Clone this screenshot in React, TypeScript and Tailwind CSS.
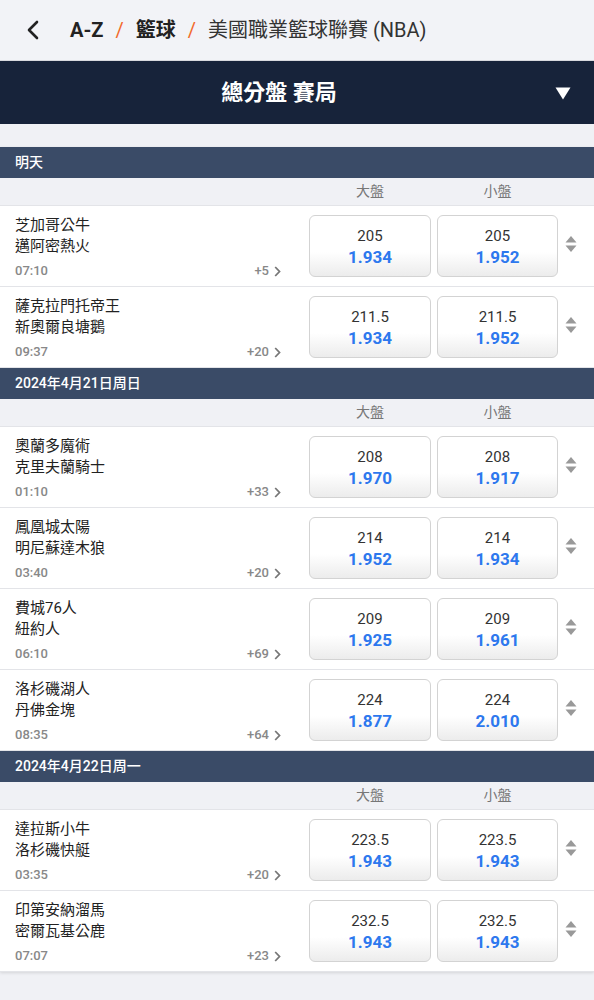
import React from 'react';

type Match = {
  home: string;
  away: string;
  time: string;
  more: number;
  over: string;
  overOdds: string;
  under: string;
  underOdds: string;
};

type Section = { title: string; matches: Match[] };

const sections: Section[] = [
  {
    title: '明天',
    matches: [
      { home: '芝加哥公牛', away: '邁阿密熱火', time: '07:10', more: 5, over: '205', overOdds: '1.934', under: '205', underOdds: '1.952' },
      { home: '薩克拉門托帝王', away: '新奧爾良塘鵝', time: '09:37', more: 20, over: '211.5', overOdds: '1.934', under: '211.5', underOdds: '1.952' },
    ],
  },
  {
    title: '2024年4月21日周日',
    matches: [
      { home: '奧蘭多魔術', away: '克里夫蘭騎士', time: '01:10', more: 33, over: '208', overOdds: '1.970', under: '208', underOdds: '1.917' },
      { home: '鳳凰城太陽', away: '明尼蘇達木狼', time: '03:40', more: 20, over: '214', overOdds: '1.952', under: '214', underOdds: '1.934' },
      { home: '費城76人', away: '紐約人', time: '06:10', more: 69, over: '209', overOdds: '1.925', under: '209', underOdds: '1.961' },
      { home: '洛杉磯湖人', away: '丹佛金塊', time: '08:35', more: 64, over: '224', overOdds: '1.877', under: '224', underOdds: '2.010' },
    ],
  },
  {
    title: '2024年4月22日周一',
    matches: [
      { home: '達拉斯小牛', away: '洛杉磯快艇', time: '03:35', more: 20, over: '223.5', overOdds: '1.943', under: '223.5', underOdds: '1.943' },
      { home: '印第安納溜馬', away: '密爾瓦基公鹿', time: '07:07', more: 23, over: '232.5', overOdds: '1.943', under: '232.5', underOdds: '1.943' },
    ],
  },
];

const font = { fontFamily: 'Roboto, "Noto Sans CJK TC", sans-serif' };

function OddsButton({ line, odds }: { line: string; odds: string }) {
  return (
    <button className="flex h-[62px] w-full flex-col items-center justify-center rounded-[6px] border border-[#d3d3d3] bg-gradient-to-b from-white from-60% to-[#ececec] pt-[1px]">
      <span className="text-[15px] leading-[20px] text-[#333]">{line}</span>
      <span className="text-[17px] font-bold leading-[22px] text-[#2d78ee]">{odds}</span>
    </button>
  );
}

function SortArrows() {
  return (
    <svg width="12" height="20" viewBox="0 0 12 20">
      <path d="M6 2 L11.5 8.5 H0.5 Z" fill="#999" />
      <path d="M6 18 L11.5 11.5 H0.5 Z" fill="#999" />
    </svg>
  );
}

function MatchRow({ m }: { m: Match }) {
  return (
    <div className="flex h-[81px] border-b border-[#e3e4e8] bg-white">
      <div className="flex w-[294px] flex-col pl-[15px] pr-[13px] pt-[9px]">
        <div className="text-[15px] leading-[21px] text-[#222]">{m.home}</div>
        <div className="text-[15px] leading-[21px] text-[#222]">{m.away}</div>
        <div className="mt-[5px] flex items-center justify-between text-[13px] font-medium leading-[18px] text-[#888]">
          <span>{m.time}</span>
          <span className="flex items-center gap-[5px]">
            +{m.more}
            <svg width="7" height="11" viewBox="0 0 7 11">
              <path d="M1.2 1 L5.5 5.5 L1.2 10" stroke="#777" strokeWidth="1.8" fill="none" />
            </svg>
          </span>
        </div>
      </div>
      <div className="ml-[15px] mt-[9px] grid w-[249px] grid-cols-[122px_121px] gap-[6px]">
        <OddsButton line={m.over} odds={m.overOdds} />
        <OddsButton line={m.under} odds={m.underOdds} />
      </div>
      <div className="flex flex-1 items-center justify-center pb-[4px] pr-[10px]">
        <SortArrows />
      </div>
    </div>
  );
}

function SectionBlock({ s }: { s: Section }) {
  return (
    <div>
      <div className="flex h-[31px] items-center bg-[#3a4b67] pl-[15px] text-[14px] font-medium text-white">
        {s.title}
      </div>
      <div className="flex h-[28px] items-center border-b border-[#e3e4e8] bg-[#f0f1f5] text-[14px] text-[#777]">
        <div className="w-[309px]" />
        <div className="w-[122px] text-center">大盤</div>
        <div className="w-[6px]" />
        <div className="w-[121px] text-center">小盤</div>
      </div>
      {s.matches.map((m) => (
        <MatchRow key={m.home} m={m} />
      ))}
    </div>
  );
}

export default function App() {
  return (
    <div className="min-h-[1000px] w-[594px] bg-[#f0f1f5]" style={font}>
      <div className="flex h-[61px] items-center border-b border-[#d8d9de] bg-[#f2f3f7] pl-[26px]">
        <svg width="14" height="20" viewBox="0 0 14 20" className="mr-[30px]">
          <path d="M11 2 L3 10 L11 18" stroke="#222" strokeWidth="2.6" fill="none" strokeLinecap="round" strokeLinejoin="round" />
        </svg>
        <span className="text-[20px] font-bold text-[#222]">A-Z</span>
        <span className="mx-[12px] text-[20px] text-[#f26a2c]">/</span>
        <span className="text-[20px] font-bold text-[#222]">籃球</span>
        <span className="mx-[12px] text-[20px] text-[#f26a2c]">/</span>
        <span className="text-[20px] text-[#333]">美國職業籃球聯賽 (NBA)</span>
      </div>
      <div className="relative flex h-[63px] items-center justify-center bg-[#17233a] pr-[36px]">
        <span className="text-[22px] font-bold text-white">總分盤 賽局</span>
        <svg width="16" height="13" viewBox="0 0 16 13" className="absolute right-[23px] top-[26px]">
          <path d="M0.5 0.5 H15.5 L8 12.5 Z" fill="white" />
        </svg>
      </div>
      <div className="h-[23px]" />
      <div className="shadow-[0_1px_3px_rgba(0,0,0,0.12)]">
        {sections.map((s) => (
          <SectionBlock key={s.title} s={s} />
        ))}
      </div>
    </div>
  );
}
